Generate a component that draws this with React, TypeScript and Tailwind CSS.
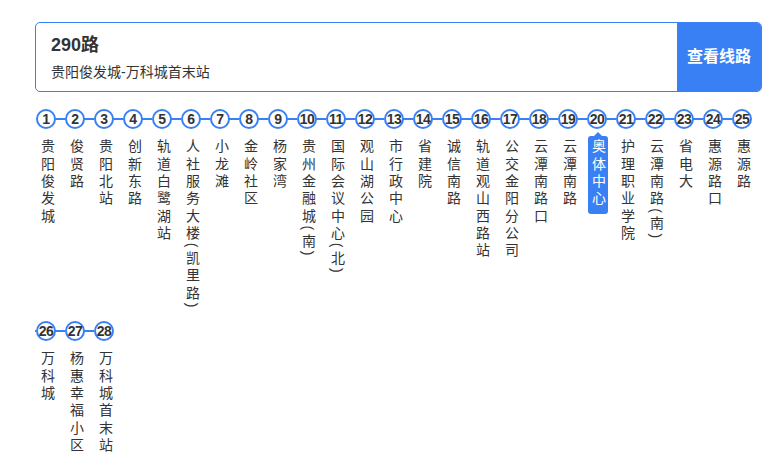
const stations = [
  '贵阳俊发城', '俊贤路', '贵阳北站', '创新东路', '轨道白鹭湖站', '人社服务大楼(凯里路)', '小龙滩',
  '金岭社区', '杨家湾', '贵州金融城(南)', '国际会议中心(北)', '观山湖公园', '市行政中心', '省建院',
  '诚信南路', '轨道观山西路站', '公交金阳分公司', '云潭南路口', '云潭南路', '奥体中心', '护理职业学院',
  '云潭南路(南)', '省电大', '惠源路口', '惠源路', '万科城', '杨惠幸福小区', '万科城首末站',
]

const current = 20

function Station({ index, name }: { index: number; name: string }) {
  const active = index === current
  return (
    <li className="relative flex w-[29px] flex-col">
      {index > 1 && <span className="absolute left-[-9px] top-[9px] h-[2px] w-[10px] bg-[#3a80f5]" />}
      <span className="ml-[1px] flex h-[20px] w-[20px] items-center justify-center rounded-full border-2 border-[#3a80f5] bg-white text-[14px] font-bold leading-none tracking-[-0.5px] text-[#333]">
        {index}
      </span>
      <div
        className={`relative ml-[2px] mt-[7px] w-[20px] rounded-[3px] pb-[6px] pl-[3px] pt-[3px] ${active ? 'bg-[#3a80f5] text-white' : 'text-[#333]'}`}
      >
        {active && (
          <span className="absolute left-[6px] top-[-4px] h-0 w-0 border-x-[4px] border-b-[4px] border-x-transparent border-b-[#3a80f5]" />
        )}
        <span className="block text-[14px] leading-[14px] tracking-[3.3px] [writing-mode:vertical-lr]">{name}</span>
      </div>
    </li>
  )
}

export default function App() {
  return (
    <div className="min-h-[470px] bg-white pl-[35px] pr-[20px] pt-[22px] font-['Liberation_Sans','Noto_Sans_CJK_SC',sans-serif]">
      <div className="flex h-[70px] overflow-hidden rounded-[5px] border border-[#3a80f5]">
        <div className="flex flex-1 flex-col px-[15px] pt-[11px]">
          <h1 className="text-[18px] font-bold leading-[22px] text-[#333]">290路</h1>
          <p className="mt-[8px] text-[14px] leading-[17px] text-[#333]">贵阳俊发城-万科城首末站</p>
        </div>
        <button className="w-[84px] bg-[#3a80f5] text-[16px] font-bold text-white">查看线路</button>
      </div>
      <ul className="mt-[17px] flex flex-wrap gap-y-[4px] overflow-hidden">
        {stations.map((name, i) => (
          <Station key={i} index={i + 1} name={name} />
        ))}
      </ul>
    </div>
  )
}
